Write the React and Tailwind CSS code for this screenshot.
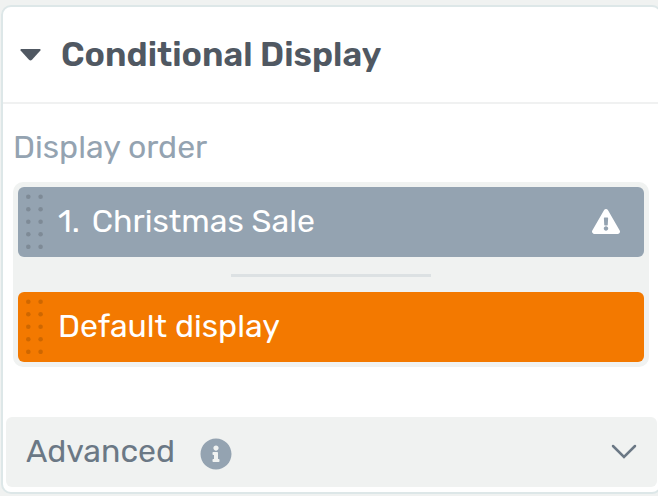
import { FaExclamationTriangle, FaInfoCircle } from "react-icons/fa";

function DragHandle() {
  const rows = [0, 1, 2, 3, 4];
  return (
    <svg className="ml-2 h-[56px] w-[18px] shrink-0 fill-black/15" viewBox="0 0 18 56" aria-hidden="true">
      {rows.map((r) => (
        <g key={r}>
          <circle cx="2.3" cy={3.8 + r * 12.5} r="2.3" />
          <circle cx="14.6" cy={3.8 + r * 12.5} r="2.3" />
        </g>
      ))}
    </svg>
  );
}

function DisplayRow({ position, label, color, warning }) {
  return (
    <li className={`flex h-[70px] cursor-grab items-center rounded-md pr-6 pb-0.5 text-[32px] leading-10 text-white ${color}`}>
      <DragHandle />
      <span className="ml-3.5 flex grow gap-3">
        {position && <span>{position}.</span>}
        <span>{label}</span>
      </span>
      {warning && <FaExclamationTriangle className="h-[25px] w-7 shrink-0" role="img" aria-label="Warning" />}
    </li>
  );
}

export default function App() {
  return (
    <div className="min-h-screen overflow-hidden bg-[#f0f2f1] pt-[5px] pb-0.5 pl-px font-['Rubik','Roboto',sans-serif]">
      <section className="-mr-1 rounded-[10px] border-2 border-[#dde7e8] bg-white pb-[5px]">
        <h2 className="border-b-2 border-[#f0f1f1]">
          <button type="button" aria-expanded="true" className="flex h-[95px] w-full items-center gap-5 pl-[17px] text-left text-[34px] leading-10 font-semibold text-[#505862]">
            <svg className="h-3 w-[21px] fill-current" viewBox="0 0 21 12" aria-hidden="true">
              <path d="M1 0H20Q21 .8 20.4 1.6L12 10.8Q10.5 12.4 9 10.8L.6 1.6Q0 .8 1 0Z" />
            </svg>
            <span>Conditional Display</span>
          </button>
        </h2>

        <div className="pt-[23px] pr-[11px] pl-2.5">
          <h3 id="display-order" className="text-[32px] leading-10 text-[#94a3b1]">Display order</h3>
          <ol aria-labelledby="display-order" className="mt-[15px] rounded-[10px] bg-[#f0f2f1] p-[5px]">
            <DisplayRow position={1} label="Christmas Sale" color="bg-[#94a3b1]" warning />
            <li role="separator" className="flex h-[35px] items-center justify-center pt-0.5">
              <span className="h-[3px] w-[200px] bg-[#dce1e3]" />
            </li>
            <DisplayRow label="Default display" color="bg-[#f37900]" />
          </ol>
        </div>

        <button type="button" aria-expanded="false" className="mx-[3px] mt-[50px] flex h-[70px] w-[calc(100%-6px)] items-center rounded-md bg-[#f0f2f1] pr-5 pb-0.5 pl-5 text-[32px] leading-10 text-[#6b7885]">
          <span>Advanced</span>
          <FaInfoCircle className="mt-1.5 ml-[25px] size-8 text-[#94a3b1]" role="img" aria-label="More information" />
          <svg className="ml-auto h-[15px] w-[26px] fill-none stroke-current" viewBox="0 0 26 15" strokeWidth="2.5" strokeLinecap="round" aria-hidden="true">
            <path d="M2 2L13 13L24 2" />
          </svg>
        </button>
      </section>
    </div>
  );
}
